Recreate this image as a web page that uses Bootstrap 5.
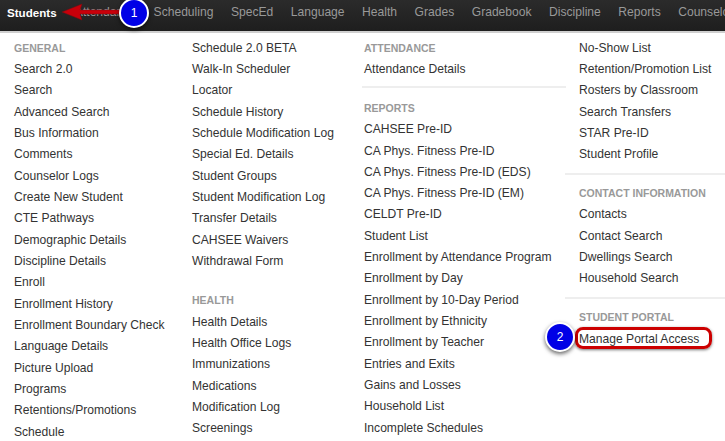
<!DOCTYPE html>
<html><head><meta charset="utf-8"><title>Students menu</title>
<link rel="stylesheet" href="https://cdn.jsdelivr.net/npm/bootstrap@5.3.0/dist/css/bootstrap.min.css">
<style>
html,body{width:725px;height:441px;overflow:hidden;background:#fff}
body{font-family:"Liberation Sans",Arial,sans-serif;font-size:12.1px;color:#333;position:relative}
.topbar{height:31px;background:linear-gradient(#2b2b2b,#1e1e1e);flex-wrap:nowrap;white-space:nowrap;padding-left:0;overflow:hidden}
.topitem{color:#999;font-size:12.1px;padding:0 8.75px;text-decoration:none;line-height:25px}
.topitem.current{color:#fff;font-weight:700;font-size:11.6px;padding:0 9.5px 0 7px}
.menupanel{border-top:2px solid #cfcfcf;position:relative;height:410px;overflow:hidden}
.menupanel::before{content:"";position:absolute;left:8px;top:-5px;border:4px solid transparent;border-top:0;border-bottom-color:#fff}
.menucol{flex:none;padding-top:4.6px}
.c1{width:192px;padding-left:14px}.c2{width:172px}.c3{width:215px}.c4{width:146px}
.menuhead{font-size:10.5px;font-weight:700;color:#999;line-height:21.33px;text-transform:uppercase}
.menulink{display:block;color:#333;text-decoration:none;line-height:21.33px;white-space:nowrap}
.menurule{border-top:2px solid #eee;height:0;margin:7px 0 8.5px}
.c3 .menurule{margin:6px 13px 9.6px -2px}
.c4 .menurule{margin-left:-14px}
.spacer{height:18px}
.outline{position:absolute;left:575px;top:327px;width:137px;height:22px;border:3px solid #c00;border-radius:8px;box-shadow:0 1px 3px rgba(0,0,0,.55)}
.numdot{position:absolute;width:30px;height:30px;border-radius:50%;background:#0000e6;border:2px solid #fff;color:#fff;font-size:12px;display:flex;align-items:center;justify-content:center;box-shadow:0 2px 4px rgba(0,0,0,.6)}
.d1{left:119px;top:-2px}.d2{left:545px;top:322px}
.arrowmark{position:absolute;left:60px;top:0}
</style></head>
<body>
<nav class="topbar d-flex align-items-start">
<a class="topitem current" href="#">Students</a>
<a class="topitem" href="#">Attendance</a>
<a class="topitem" href="#">Scheduling</a>
<a class="topitem" href="#">SpecEd</a>
<a class="topitem" href="#">Language</a>
<a class="topitem" href="#">Health</a>
<a class="topitem" href="#">Grades</a>
<a class="topitem" href="#">Gradebook</a>
<a class="topitem" href="#">Discipline</a>
<a class="topitem" href="#">Reports</a>
<a class="topitem" href="#">Counselor</a>
</nav>
<div class="menupanel d-flex">
<div class="menucol c1">
<div class="menuhead">General</div>
<a class="menulink" href="#">Search 2.0</a><a class="menulink" href="#">Search</a><a class="menulink" href="#">Advanced Search</a><a class="menulink" href="#">Bus Information</a><a class="menulink" href="#">Comments</a><a class="menulink" href="#">Counselor Logs</a><a class="menulink" href="#">Create New Student</a><a class="menulink" href="#">CTE Pathways</a><a class="menulink" href="#">Demographic Details</a><a class="menulink" href="#">Discipline Details</a><a class="menulink" href="#">Enroll</a><a class="menulink" href="#">Enrollment History</a><a class="menulink" href="#">Enrollment Boundary Check</a><a class="menulink" href="#">Language Details</a><a class="menulink" href="#">Picture Upload</a><a class="menulink" href="#">Programs</a><a class="menulink" href="#">Retentions/Promotions</a><a class="menulink" href="#">Schedule</a>
</div>
<div class="menucol c2">
<a class="menulink" href="#">Schedule 2.0 BETA</a><a class="menulink" href="#">Walk-In Scheduler</a><a class="menulink" href="#">Locator</a><a class="menulink" href="#">Schedule History</a><a class="menulink" href="#">Schedule Modification Log</a><a class="menulink" href="#">Special Ed. Details</a><a class="menulink" href="#">Student Groups</a><a class="menulink" href="#">Student Modification Log</a><a class="menulink" href="#">Transfer Details</a><a class="menulink" href="#">CAHSEE Waivers</a><a class="menulink" href="#">Withdrawal Form</a>
<div class="spacer"></div>
<div class="menuhead">Health</div>
<a class="menulink" href="#">Health Details</a><a class="menulink" href="#">Health Office Logs</a><a class="menulink" href="#">Immunizations</a><a class="menulink" href="#">Medications</a><a class="menulink" href="#">Modification Log</a><a class="menulink" href="#">Screenings</a>
</div>
<div class="menucol c3">
<div class="menuhead">Attendance</div>
<a class="menulink" href="#">Attendance Details</a>
<div class="menurule"></div>
<div class="menuhead">Reports</div>
<a class="menulink" href="#">CAHSEE Pre-ID</a><a class="menulink" href="#">CA Phys. Fitness Pre-ID</a><a class="menulink" href="#">CA Phys. Fitness Pre-ID (EDS)</a><a class="menulink" href="#">CA Phys. Fitness Pre-ID (EM)</a><a class="menulink" href="#">CELDT Pre-ID</a><a class="menulink" href="#">Student List</a><a class="menulink" href="#">Enrollment by Attendance Program</a><a class="menulink" href="#">Enrollment by Day</a><a class="menulink" href="#">Enrollment by 10-Day Period</a><a class="menulink" href="#">Enrollment by Ethnicity</a><a class="menulink" href="#">Enrollment by Teacher</a><a class="menulink" href="#">Entries and Exits</a><a class="menulink" href="#">Gains and Losses</a><a class="menulink" href="#">Household List</a><a class="menulink" href="#">Incomplete Schedules</a>
</div>
<div class="menucol c4">
<a class="menulink" href="#">No-Show List</a><a class="menulink" href="#">Retention/Promotion List</a><a class="menulink" href="#">Rosters by Classroom</a><a class="menulink" href="#">Search Transfers</a><a class="menulink" href="#">STAR Pre-ID</a><a class="menulink" href="#">Student Profile</a>
<div class="menurule"></div>
<div class="menuhead">Contact Information</div>
<a class="menulink" href="#">Contacts</a><a class="menulink" href="#">Contact Search</a><a class="menulink" href="#">Dwellings Search</a><a class="menulink" href="#">Household Search</a>
<div class="menurule"></div>
<div class="menuhead">Student Portal</div>
<a class="menulink" href="#">Manage Portal Access</a>
</div>
</div>
<svg class="arrowmark" width="64" height="24" viewBox="0 0 64 24"><path d="M62 10V14H20L22 20L2 12L22 4L20 10Z" fill="#c8000a" stroke="#7d0b10" stroke-width=".5"/></svg>
<div class="numdot d1">1</div>
<div class="outline"></div>
<div class="numdot d2">2</div>
</body></html>
